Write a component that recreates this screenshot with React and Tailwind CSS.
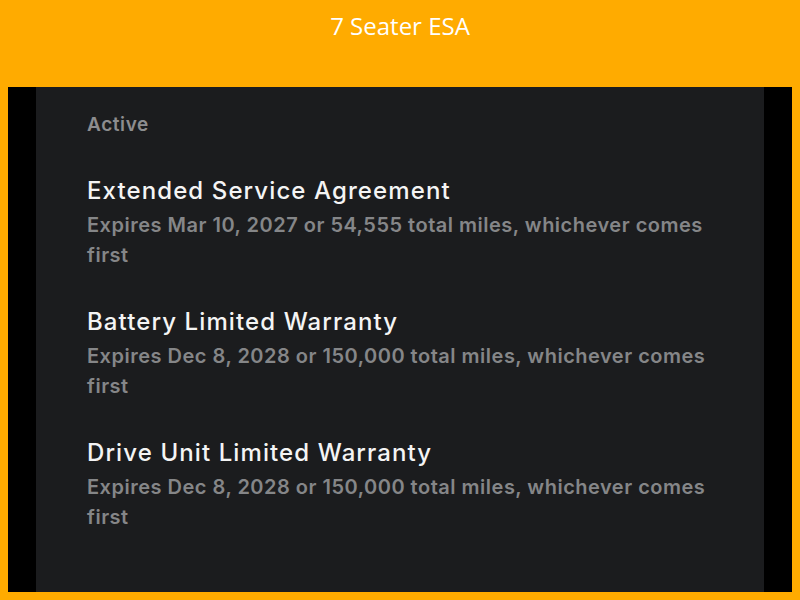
import React from 'react';

const items = [
  { title: 'Extended Service Agreement', sub: 'Expires Mar 10, 2027 or 54,555 total miles, whichever comes first' },
  { title: 'Battery Limited Warranty', sub: 'Expires Dec 8, 2028 or 150,000 total miles, whichever comes first' },
  { title: 'Drive Unit Limited Warranty', sub: 'Expires Dec 8, 2028 or 150,000 total miles, whichever comes first' },
];

export default function App() {
  return (
    <div className="w-[800px] h-[600px] bg-[#ffab00] flex flex-col overflow-hidden">
      <div className="h-[87px] pt-[10px] text-center text-white text-[24px] leading-[32px]"
        style={{ fontFamily: "'Open Sans', sans-serif" }}>
        7 Seater ESA
      </div>
      <div className="mx-2 h-[505px] bg-black px-[28px] flex">
        <div className="flex-1 bg-[#1b1c1e] pl-[51px] pr-[36px] pt-[25px]"
          style={{ fontFamily: "Inter, sans-serif" }}>
          <div className="text-[19px] leading-[26px] font-semibold tracking-[0.6px] text-[#8d8d8f]">Active</div>
          <div className="flex flex-col gap-[37px] mt-[38px]">
            {items.map((it) => (
              <div key={it.title}>
                <div className="text-[24px] leading-[30px] font-medium tracking-[1.1px] text-[#f4f4f4]">{it.title}</div>
                <div className="mt-[4px] text-[20px] leading-[30px] font-semibold tracking-[0.5px] text-[#858688]">{it.sub}</div>
              </div>
            ))}
          </div>
        </div>
      </div>
    </div>
  );
}
